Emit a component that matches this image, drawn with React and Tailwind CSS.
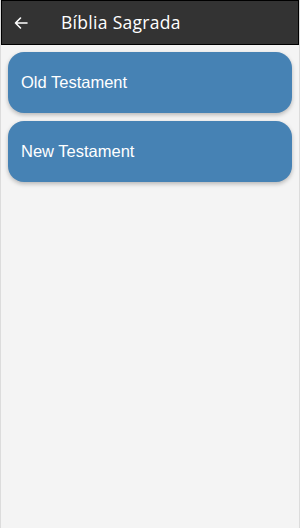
import React from "react";

export default function App() {
  const books = ["Old Testament", "New Testament"];

  return (
    <div className="min-h-[528px] bg-[#f4f4f4] border-x border-[#dcdcdc] flex flex-col">
      {/* Header */}
      <div className="h-[45px] bg-[#333333] border border-black flex items-center">
        <button className="w-[38px] flex items-center justify-center">
          <svg width="16" height="16" viewBox="0 0 16 16" fill="none" stroke="white" strokeWidth="1.6" strokeLinecap="round" strokeLinejoin="round">
            <path d="M14 8H2.5M7.5 3L2.5 8l5 5" />
          </svg>
        </button>
        <h1 className="ml-[21px] text-white text-[17.5px] font-medium font-['Open_Sans',sans-serif] tracking-[0.3px]">
          Bíblia Sagrada
        </h1>
      </div>

      {/* List */}
      <div className="flex flex-col gap-[8px] px-[7px] pt-[7px]">
        {books.map((b) => (
          <div
            key={b}
            className="h-[61px] bg-[#4682b4] rounded-[16px] shadow-[0_2px_4px_rgba(0,0,0,0.25)] flex items-center px-[13px]"
          >
            <span className="text-white text-[16.5px] font-['Liberation_Sans',Arial,sans-serif]">
              {b}
            </span>
          </div>
        ))}
      </div>
    </div>
  );
}
